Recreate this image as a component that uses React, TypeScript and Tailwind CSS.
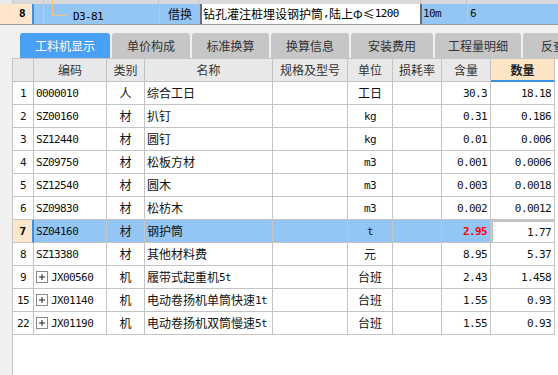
import React from 'react';

const mono = "font-['DejaVu_Sans_Mono',monospace] text-[11px] tracking-[-0.6px]";
const cjk = "font-['Noto_Sans_CJK_SC',sans-serif] text-[12px]";

function Txt({ t }: { t: string }) {
  const parts = t.split(/([\x00-\x7f]+)/).filter(Boolean);
  return (
    <>
      {parts.map((p, i) =>
        /^[\x00-\x7f]+$/.test(p) ? (
          <span key={i} className={mono}>{p}</span>
        ) : (
          <span key={i} className={cjk}>{p}</span>
        )
      )}
    </>
  );
}

type Row = {
  n: string;
  code: string;
  type: string;
  name: string;
  unit: string;
  content: string;
  qty: string;
  selected?: boolean;
  expand?: boolean;
};

const rows: Row[] = [
  { n: '1', code: '0000010', type: '人', name: '综合工日', unit: '工日', content: '30.3', qty: '18.18' },
  { n: '2', code: 'SZ00160', type: '材', name: '扒钉', unit: 'kg', content: '0.31', qty: '0.186' },
  { n: '3', code: 'SZ12440', type: '材', name: '圆钉', unit: 'kg', content: '0.01', qty: '0.006' },
  { n: '4', code: 'SZ09750', type: '材', name: '松板方材', unit: 'm3', content: '0.001', qty: '0.0006' },
  { n: '5', code: 'SZ12540', type: '材', name: '圆木', unit: 'm3', content: '0.003', qty: '0.0018' },
  { n: '6', code: 'SZ09830', type: '材', name: '松枋木', unit: 'm3', content: '0.002', qty: '0.0012' },
  { n: '7', code: 'SZ04160', type: '材', name: '钢护筒', unit: 't', content: '2.95', qty: '1.77', selected: true },
  { n: '8', code: 'SZ13380', type: '材', name: '其他材料费', unit: '元', content: '8.95', qty: '5.37' },
  { n: '9', code: 'JX00560', type: '机', name: '履带式起重机5t', unit: '台班', content: '2.43', qty: '1.458', expand: true },
  { n: '15', code: 'JX01140', type: '机', name: '电动卷扬机单筒快速1t', unit: '台班', content: '1.55', qty: '0.93', expand: true },
  { n: '22', code: 'JX01190', type: '机', name: '电动卷扬机双筒慢速5t', unit: '台班', content: '1.55', qty: '0.93', expand: true },
];

const tabs = [
  { label: '工料机显示', w: 'w-[90px]', active: true },
  { label: '单价构成', w: 'w-[78px]' },
  { label: '标准换算', w: 'w-[77px]' },
  { label: '换算信息', w: 'w-[78px]' },
  { label: '安装费用', w: 'w-[82px]' },
  { label: '工程量明细', w: 'w-[86px]' },
  { label: '反查', w: 'w-[60px]' },
];

const headers = ['', '编码', '类别', '名称', '规格及型号', '单位', '损耗率', '含量', '数量'];

const cell = 'h-[23px] border-r border-b border-[#c4c4c4] flex items-center overflow-hidden whitespace-nowrap leading-none text-[#111]';

function PlusBox() {
  return (
    <svg width="12" height="12" viewBox="0 0 12 12" className="shrink-0">
      <rect x="0.5" y="0.5" width="11" height="11" fill="white" stroke="#8a8a8a" />
      <path d="M3 6h6M6 3v6" stroke="#222" strokeWidth="1" />
    </svg>
  );
}

function TopGrid() {
  return (
    <div className="shrink-0">
      <div className="h-[4px] flex bg-[#d9d9d9]">
        <div className="w-[12px] bg-[#ebebeb]" />
        <div className="w-[31px] border-l border-[#c8c8c8]" />
        <div className="w-px bg-[#f5c37d]" />
        <div className="w-[8px]" />
        <div className="w-px bg-[#f5c37d]" />
        <div className="w-[106px] border-r border-[#c4c4c4]" />
        <div className="w-[40px] border-r border-[#c4c4c4]" />
        <div className="w-[222px] border-r border-[#c4c4c4]" />
        <div className="w-[46px] border-r border-[#c4c4c4]" />
        <div className="flex-1" />
      </div>
      <div className="h-[21px] flex bg-[#93c6f5] border-b border-[#9a9a9a]">
        <div className="w-[32px] bg-[#fde6c9] pl-[12px] flex items-center justify-center">
          <span className={mono + ' font-bold text-black'}>8</span>
        </div>
        <div className="w-[2px] bg-[#3d8ee6]" />
        <div className="w-[126px] border-r border-[#a9cbe9] flex items-center">
          <svg width="36" height="20" viewBox="0 0 36 20" className="shrink-0">
            <path d="M9.5 0v20M18.5 0v11.5H33" stroke="#f5c37d" strokeWidth="1" fill="none" />
          </svg>
          <span className="ml-[3px]"><Txt t="D3-81" /></span>
        </div>
        <div className="w-[40px] flex items-center justify-center text-[#111]">
          <Txt t="借换" />
        </div>
        <div className="w-[222px] bg-white border-x-2 border-[#6b6b6b] flex items-center pl-[1px] whitespace-nowrap overflow-hidden text-black">
          <Txt t="钻孔灌注桩埋设钢护筒,陆上Φ≤1200" />
        </div>
        <div className="w-[46px] border-r border-[#a9cbe9] flex items-center pl-[1px] text-[#111]">
          <Txt t="10m" />
        </div>
        <div className="flex-1 flex items-center pl-[2px] text-[#111]">
          <Txt t="6" />
        </div>
      </div>
    </div>
  );
}

function Tabs() {
  return (
    <div className="h-[25px] flex gap-[2px] pl-[20px] shrink-0">
      {tabs.map((t) => (
        <div
          key={t.label}
          className={
            t.w +
            ' shrink-0 rounded-t-[3px] flex items-center justify-center ' +
            (t.active ? 'bg-[#4a9ff6] text-white' : 'bg-[#c6c6c6] text-[#333]')
          }
        >
          <span className={cjk}>{t.label}</span>
        </div>
      ))}
    </div>
  );
}

function Table() {
  return (
    <div className="flex-1 ml-[12px] bg-white border-l border-t border-[#c4c4c4]">
      <div className="grid grid-cols-[21px_73px_38px_128px_75px_45px_49px_49px_64px]">
        {headers.map((h, i) => (
          <div
            key={i}
            className={
              cell +
              ' justify-center ' +
              (i === 8
                ? 'bg-[#fde4c4] font-bold text-[#222] border-b-2 border-b-[#3d8ee6]'
                : 'bg-[#e8e8e8] text-[#333]')
            }
          >
            <span className={cjk}>{h}</span>
          </div>
        ))}
        {rows.map((r) => {
          const bg = r.selected ? ' bg-[#93c6f5]' : '';
          return (
            <React.Fragment key={r.n}>
              <div
                className={
                  cell +
                  ' justify-center ' +
                  (r.selected ? 'bg-[#fde6c9] font-bold text-black border-r-2 border-r-[#3d8ee6]' : '')
                }
              >
                <Txt t={r.n} />
              </div>
              <div className={cell + bg + ' pl-[2px] gap-[3px]'}>
                {r.expand && <PlusBox />}
                <Txt t={r.code} />
              </div>
              <div className={cell + bg + ' justify-center'}>
                <Txt t={r.type} />
              </div>
              <div className={cell + bg + ' pl-[2px]'}>
                <Txt t={r.name} />
              </div>
              <div className={cell + bg} />
              <div className={cell + bg + ' justify-center'}>
                <Txt t={r.unit} />
              </div>
              <div className={cell + bg} />
              <div
                className={
                  cell + bg + ' justify-end pr-[3px] ' + (r.selected ? 'text-[#ff0000] font-bold' : '')
                }
              >
                <Txt t={r.content} />
              </div>
              <div
                className={
                  cell +
                  ' justify-end pr-[3px] ' +
                  (r.selected ? 'bg-white border-2 border-[#777777] pr-[2px]' : '')
                }
              >
                <Txt t={r.qty} />
              </div>
            </React.Fragment>
          );
        })}
      </div>
    </div>
  );
}

export default function App() {
  return (
    <div className="w-[558px] h-[375px] overflow-hidden bg-[#f0f0f0] flex flex-col">
      <TopGrid />
      <div className="h-[8px] shrink-0" />
      <Tabs />
      <Table />
    </div>
  );
}
